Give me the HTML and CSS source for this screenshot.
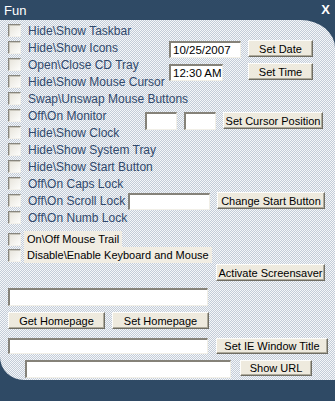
FILE: index.html
```html
<html>
<head>
    <link rel="stylesheet" href="styles.css">
</head>
<body>
    <div class="window">
        <div class="titlebar">
            <span class="title">Fun</span>
            <span class="close">X</span>
        </div>

        <div class="panel">
            <!-- Toggles with the controls laid over the same grid cell -->
            <div class="toggles">
                <div class="list">
                    <label class="opt"><span class="box"></span>Hide\Show Taskbar</label>
                    <label class="opt"><span class="box"></span>Hide\Show Icons</label>
                    <label class="opt"><span class="box"></span>Open\Close CD Tray</label>
                    <label class="opt"><span class="box"></span>Hide\Show Mouse Cursor</label>
                    <label class="opt"><span class="box"></span>Swap\Unswap Mouse Buttons</label>
                    <label class="opt"><span class="box"></span>Off\On Monitor</label>
                    <label class="opt"><span class="box"></span>Hide\Show Clock</label>
                    <label class="opt"><span class="box"></span>Hide\Show System Tray</label>
                    <label class="opt"><span class="box"></span>Hide\Show Start Button</label>
                    <label class="opt"><span class="box"></span>Off\On Caps Lock</label>
                    <label class="opt"><span class="box"></span>Off\On Scroll Lock</label>
                    <label class="opt"><span class="box"></span>Off\On Numb Lock</label>
                </div>

                <div class="controls">
                    <div class="group date-group">
                        <span class="field date">10/25/2007</span>
                        <span class="btn set-btn">Set Date</span>
                    </div>
                    <div class="group time-group">
                        <span class="field time">12:30 AM</span>
                        <span class="btn set-btn">Set Time</span>
                    </div>
                    <div class="group cursor-group">
                        <span class="field small"></span>
                        <span class="field small"></span>
                        <span class="btn cursor-btn">Set Cursor Position</span>
                    </div>
                    <div class="group start-group">
                        <span class="field start"></span>
                        <span class="btn start-btn">Change Start Button</span>
                    </div>
                </div>
            </div>

            <div class="extras">
                <label class="plain first"><span class="box"></span><span class="tag">On\Off Mouse Trail</span></label>
                <label class="plain"><span class="box"></span><span class="tag">Disable\Enable Keyboard and Mouse</span></label>

                <div class="saver-row">
                    <span class="btn saver-btn">Activate Screensaver</span>
                </div>

                <span class="field wide home"></span>

                <div class="home-row">
                    <span class="btn home-btn">Get Homepage</span>
                    <span class="btn home-btn">Set Homepage</span>
                </div>

                <div class="ie-row">
                    <span class="field wide"></span>
                    <span class="btn ie-btn">Set IE Window Title</span>
                </div>

                <div class="url-row">
                    <span class="field url"></span>
                    <span class="btn url-btn">Show URL</span>
                </div>
            </div>
        </div>
    </div>
</body>
</html>
```

FILE: styles.css
```css
body {
    margin: 0;
    background-color: #2f4a65;
}
.window {
    width: 335px;
    height: 401px;
    background-color: #2f4a65;
    font-family: "Liberation Sans", Arial, sans-serif;
    overflow: hidden;
}
.titlebar {
    height: 20px;
    display: flex;
    align-items: center;
    justify-content: space-between;
    padding: 0 5px 0 4px;
    color: white;
}
.title {
    font-size: 13px;
    margin-top: 1px;
}
.close {
    font-size: 13px;
    font-weight: bold;
    margin-top: -1px;
}
.panel {
    height: 360px;
    box-sizing: border-box;
    padding: 2px 0 0 8px;
    background-color: #dbe1e8;
    background-image: repeating-conic-gradient(#c3ccd8 0 25%, #f5f7f9 0 50%);
    background-size: 2px 2px;
    border-top-right-radius: 34px 28px;
    border-bottom-left-radius: 24px 23px;
}

/* checkbox list */
.toggles {
    display: grid;
    grid-template-columns: 1fr;
}
.list, .controls {
    grid-area: 1 / 1;
}
.list {
    display: flex;
    flex-direction: column;
}
.opt {
    height: 17px;
    display: flex;
    align-items: center;
    gap: 7px;
    font-size: 12px;
    color: #31496c;
    white-space: nowrap;
}
.box {
    width: 13px;
    height: 13px;
    box-sizing: border-box;
    flex: none;
    border: 1px solid;
    border-color: #87857d #f2f0ea #f2f0ea #87857d;
    box-shadow: inset 1px 1px #c9c6bc;
    background: linear-gradient(135deg, #e6e3da, #fdfdfb);
}

/* controls over the list */
.controls {
    display: flex;
    flex-direction: column;
    align-items: flex-start;
}
.group {
    display: flex;
    align-items: flex-start;
}
.date-group {
    margin: 18px 0 0 161px;
    gap: 7px;
}
.time-group {
    margin: 5px 0 0 161px;
    gap: 25px;
}
.cursor-group {
    margin: 31px 0 0 137px;
    gap: 7px;
}
.start-group {
    margin: 62px 0 0 120px;
    gap: 7px;
}
.field {
    height: 17px;
    box-sizing: border-box;
    display: flex;
    align-items: center;
    padding-left: 2px;
    background-color: white;
    border-style: solid;
    border-width: 2px 1px 1px 2px;
    border-color: #858279 #f1efe7 #f1efe7 #858279;
    font-size: 11.5px;
    color: black;
    white-space: nowrap;
    overflow: hidden;
}
.date-group .field, .time-group .field, .start-group .field {
    margin-top: 1px;
}
.date { width: 72px; }
.time { width: 54px; }
.small { width: 32px; height: 18px; }
.start { width: 82px; }
.btn {
    height: 17px;
    box-sizing: border-box;
    display: flex;
    align-items: center;
    justify-content: center;
    background-color: #eeeade;
    border: 1px solid;
    border-color: #fdfdfb #6f6d63 #6f6d63 #fdfdfb;
    box-shadow: inset -1px -1px #aeaa9b;
    font-size: 11px;
    color: black;
    white-space: nowrap;
}
.set-btn { width: 65px; }
.cursor-btn { width: 100px; }
.start-btn { width: 108px; }

/* lower part */
.extras {
    display: flex;
    flex-direction: column;
    align-items: flex-start;
}
.plain {
    height: 16px;
    display: flex;
    align-items: center;
    gap: 3px;
}
.plain.first {
    margin-top: 5px;
}
.tag {
    height: 16px;
    display: flex;
    align-items: center;
    padding: 0 3px;
    background-color: #f1ede3;
    font-size: 11px;
    color: black;
    white-space: nowrap;
}
.saver-row {
    align-self: stretch;
    display: flex;
    justify-content: flex-end;
    padding-right: 10px;
    margin-top: 1px;
}
.saver-btn { width: 109px; }
.wide { width: 200px; height: 18px; }
.home {
    margin-top: 7px;
}
.home-row {
    display: flex;
    gap: 7px;
    margin-top: 6px;
}
.home-btn { width: 97px; }
.ie-row {
    display: flex;
    gap: 8px;
    margin-top: 9px;
}
.ie-row .field { height: 16px; }
.ie-btn { width: 112px; height: 16px; }
.url-row {
    display: flex;
    gap: 9px;
    margin: 6px 0 0 17px;
}
.url { width: 206px; height: 18px; }
.url-btn { width: 72px; height: 16px; }
```
